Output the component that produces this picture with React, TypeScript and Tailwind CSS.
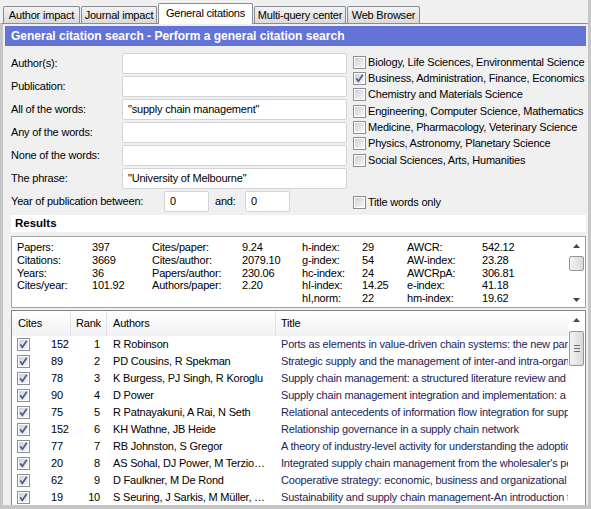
import React from 'react';

const tabs = [
  { label: 'Author impact', w: 'w-[77px]', active: false },
  { label: 'Journal impact', w: 'w-[76px]', active: false },
  { label: 'General citations', w: 'w-[95px]', active: true },
  { label: 'Multi-query center', w: 'w-[92px]', active: false },
  { label: 'Web Browser', w: 'w-[73px]', active: false },
];

const fields = [
  { label: 'Author(s):', value: '' },
  { label: 'Publication:', value: '' },
  { label: 'All of the words:', value: '"supply chain management"' },
  { label: 'Any of the words:', value: '' },
  { label: 'None of the words:', value: '' },
  { label: 'The phrase:', value: '"University of Melbourne"' },
];

const categories = [
  { label: 'Biology, Life Sciences, Environmental Science', checked: false },
  { label: 'Business, Administration, Finance, Economics', checked: true },
  { label: 'Chemistry and Materials Science', checked: false },
  { label: 'Engineering, Computer Science, Mathematics', checked: false },
  { label: 'Medicine, Pharmacology, Veterinary Science', checked: false },
  { label: 'Physics, Astronomy, Planetary Science', checked: false },
  { label: 'Social Sciences, Arts, Humanities', checked: false },
];

const stats = [
  ['Papers:', '397', 'Cites/paper:', '9.24', 'h-index:', '29', 'AWCR:', '542.12'],
  ['Citations:', '3669', 'Cites/author:', '2079.10', 'g-index:', '54', 'AW-index:', '23.28'],
  ['Years:', '36', 'Papers/author:', '230.06', 'hc-index:', '24', 'AWCRpA:', '306.81'],
  ['Cites/year:', '101.92', 'Authors/paper:', '2.20', 'hI-index:', '14.25', 'e-index:', '41.18'],
  ['', '', '', '', 'hI,norm:', '22', 'hm-index:', '19.62'],
];

const rows = [
  { cites: 152, rank: 1, authors: 'R Robinson', title: 'Ports as elements in value-driven chain systems: the new paradigm' },
  { cites: 89, rank: 2, authors: 'PD Cousins, R Spekman', title: 'Strategic supply and the management of inter-and intra-organisational relationships' },
  { cites: 78, rank: 3, authors: 'K Burgess, PJ Singh, R Koroglu', title: 'Supply chain management: a structured literature review and implications for future research' },
  { cites: 90, rank: 4, authors: 'D Power', title: 'Supply chain management integration and implementation: a literature review' },
  { cites: 75, rank: 5, authors: 'R Patnayakuni, A Rai, N Seth', title: 'Relational antecedents of information flow integration for supply chain coordination' },
  { cites: 152, rank: 6, authors: 'KH Wathne, JB Heide', title: 'Relationship governance in a supply chain network' },
  { cites: 77, rank: 7, authors: 'RB Johnston, S Gregor', title: 'A theory of industry-level activity for understanding the adoption of interorganizational systems' },
  { cites: 20, rank: 8, authors: 'AS Sohal, DJ Power, M Terzio…', title: "Integrated supply chain management from the wholesaler's perspective" },
  { cites: 62, rank: 9, authors: 'D Faulkner, M De Rond', title: 'Cooperative strategy: economic, business and organizational issues' },
  { cites: 19, rank: 10, authors: 'S Seuring, J Sarkis, M Müller, …', title: 'Sustainability and supply chain management-An introduction to the special issue' },
];

const Check: React.FC<{ checked?: boolean }> = ({ checked }) => (
  <span className="relative inline-block w-[13px] h-[13px] shrink-0 border border-[#8e8f8f] bg-white">
    <span className="absolute inset-[1px] bg-linear-to-br from-[#cfd1d5] to-[#f7f7f7]" />
    {checked && (
      <svg className="absolute inset-0" width="11" height="11" viewBox="0 0 11 11">
        <path d="M2.2 5.4 L4.4 8.2 L8.8 1.8" stroke="#4a5d94" strokeWidth="1.7" fill="none" />
      </svg>
    )}
  </span>
);

const Arrow: React.FC<{ up?: boolean }> = ({ up }) => (
  <svg width="7" height="4" viewBox="0 0 7 4">
    <path d={up ? 'M0 4 L3.5 0 L7 4 Z' : 'M0 0 L3.5 4 L7 0 Z'} fill="#474747" />
  </svg>
);

const Thumb: React.FC<{ h: string; grip?: boolean }> = ({ h, grip }) => (
  <div className={`${h} mx-[1px] rounded-[2px] border border-[#979797] bg-linear-to-r from-[#f3f3f3] to-[#d9d9d9] flex flex-col items-center justify-center gap-[2px]`}>
    {grip && (
      <>
        <span className="block w-[6px] h-px bg-[#6f6f6f]" />
        <span className="block w-[6px] h-px bg-[#6f6f6f]" />
        <span className="block w-[6px] h-px bg-[#6f6f6f]" />
      </>
    )}
  </div>
);

const Input: React.FC<{ value: string; w: string }> = ({ value, w }) => (
  <div className={`${w} h-[21px] shrink-0 bg-white border border-[#d2d4d9] rounded-[2px] pl-[5px] flex items-center whitespace-nowrap overflow-hidden`}>
    {value}
  </div>
);

export default function App() {
  return (
    <div className="w-[591px] h-[509px] flex flex-col bg-[#f0f0f0] border-r-[3px] border-[#c6c6c6] overflow-hidden font-['Liberation_Sans',Arial,sans-serif] text-[11px] tracking-[-0.2px] text-black leading-none">
      {/* tab strip */}
      <div className="h-[23px] shrink-0 flex items-end pl-[3px]">
        {tabs.map((t, i) =>
          t.active ? (
            <div
              key={t.label}
              className={`${t.w} ml-[1px] h-[21px] -mb-px relative z-10 bg-white border border-b-0 border-[#898c95] rounded-t-[2px] flex items-center justify-center pb-[1px]`}
            >
              {t.label}
            </div>
          ) : (
            <div
              key={t.label}
              className={`${t.w} ${i === 0 ? '' : 'ml-[1px]'} h-[17px] bg-linear-to-b from-[#f3f3f3] to-[#dbdbdb] border border-b-0 border-[#898c95] rounded-t-[2px] flex items-center justify-center`}
            >
              {t.label}
            </div>
          )
        )}
      </div>

      {/* tab page */}
      <div className="flex-1 min-h-0 flex flex-col border-t border-t-[#898c95] border-l-[3px] border-l-[#c6c6c6] border-b-[4px] border-b-[#c6c6c6] pt-[2px] px-[2px]">
        <div className="h-[20px] shrink-0 bg-[#6474d6] text-white font-bold text-[12px] tracking-normal flex items-center pl-[6px]">
          General citation search - Perform a general citation search
        </div>

        <div className="flex-1 min-h-0 flex flex-col pl-[6px]">
          {/* search form */}
          <div className="flex pt-[7px]">
            <div className="flex flex-col">
              {fields.map(f => (
                <div key={f.label} className="flex items-center mb-[2px]">
                  <span className="w-[111px] shrink-0">{f.label}</span>
                  <Input value={f.value} w="w-[225px]" />
                </div>
              ))}
              <div className="flex items-center">
                <span className="w-[153px] shrink-0">Year of publication between:</span>
                <Input value="0" w="w-[45px]" />
                <span className="w-[30px] ml-[6px] shrink-0">and:</span>
                <Input value="0" w="w-[45px]" />
              </div>
            </div>

            <div className="ml-[6px] pt-[1px] flex flex-col">
              {categories.map(c => (
                <div key={c.label} className="h-[16.33px] flex items-center whitespace-nowrap">
                  <Check checked={c.checked} />
                  <span className="ml-[2px]">{c.label}</span>
                </div>
              ))}
              <div className="h-[16px] mt-[26px] flex items-center">
                <Check />
                <span className="ml-[2px]">Title words only</span>
              </div>
            </div>
          </div>

          {/* results */}
          <div className="mt-[3px] h-[17px] shrink-0 bg-white pl-[4px] flex items-center font-bold text-[11.5px] tracking-normal">
            Results
          </div>

          <div className="mt-[4px] h-[72px] shrink-0 flex bg-white border border-[#a3a3a3]">
            <div className="flex-1 pt-[4px] pl-[5px] grid grid-cols-[75px_60px_90px_60px_60px_45px_75px_1fr] auto-rows-[12.75px] content-start whitespace-nowrap">
              {stats.flat().map((s, i) => (
                <span key={i} className="leading-[12.75px]">{s}</span>
              ))}
            </div>
            <div className="w-[17px] shrink-0 flex flex-col">
              <div className="h-[17px] flex items-center justify-center pt-[1px]"><Arrow up /></div>
              <div className="mt-[2px]"><Thumb h="h-[15px]" /></div>
              <div className="flex-1" />
              <div className="h-[17px] flex items-center justify-center pt-[3px]"><Arrow /></div>
            </div>
          </div>

          {/* publication list */}
          <div className="mt-[2px] flex-1 min-h-0 flex bg-white border border-b-0 border-[#858585] overflow-hidden">
            <div className="flex-1 min-w-0 flex flex-col">
              <div className="h-[25px] shrink-0 flex bg-linear-to-b from-white to-[#f1f2f4]">
                <div className="w-[59px] shrink-0 border-r border-[#e2e3e5] pl-[6px] flex items-center">Cites</div>
                <div className="w-[36px] shrink-0 border-r border-[#e2e3e5] pl-[5px] flex items-center">Rank</div>
                <div className="w-[169px] shrink-0 border-r border-[#e2e3e5] pl-[6px] flex items-center">Authors</div>
                <div className="flex-1 pl-[5px] flex items-center">Title</div>
              </div>
              {rows.map(r => (
                <div key={r.rank} className="h-[17px] shrink-0 flex items-center whitespace-nowrap">
                  <div className="w-[59px] shrink-0 flex items-center">
                    <span className="ml-[5px] flex"><Check checked /></span>
                    <span className="ml-[21px]">{r.cites}</span>
                  </div>
                  <div className="w-[36px] shrink-0 text-right pr-[7px]">{r.rank}</div>
                  <div className="w-[169px] shrink-0 pl-[6px] overflow-hidden">{r.authors}</div>
                  <div className="flex-1 min-w-0 pl-[5px] overflow-hidden text-[#1c2358]">{r.title}</div>
                </div>
              ))}
            </div>
            <div className="w-[17px] shrink-0 flex flex-col">
              <div className="h-[17px] flex items-center justify-center"><Arrow up /></div>
              <div className="mt-[3px]"><Thumb h="h-[35px]" grip /></div>
            </div>
          </div>
        </div>
      </div>
    </div>
  );
}
